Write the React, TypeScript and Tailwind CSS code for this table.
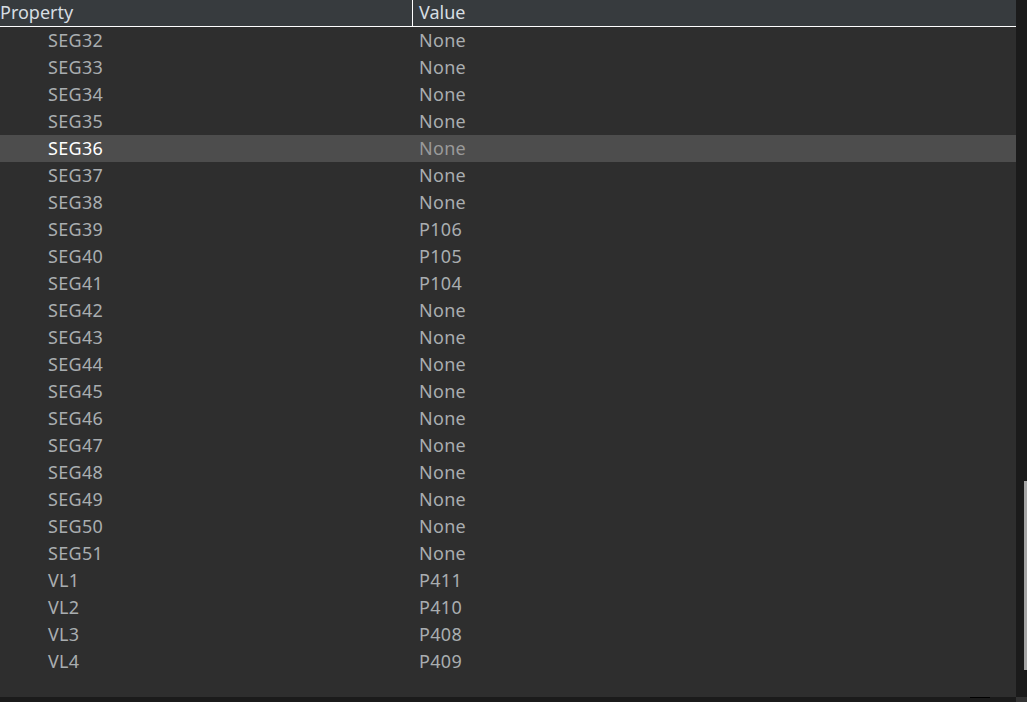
import React from 'react';

const rows: [string, string][] = [
  ['SEG32', 'None'],
  ['SEG33', 'None'],
  ['SEG34', 'None'],
  ['SEG35', 'None'],
  ['SEG36', 'None'],
  ['SEG37', 'None'],
  ['SEG38', 'None'],
  ['SEG39', 'P106'],
  ['SEG40', 'P105'],
  ['SEG41', 'P104'],
  ['SEG42', 'None'],
  ['SEG43', 'None'],
  ['SEG44', 'None'],
  ['SEG45', 'None'],
  ['SEG46', 'None'],
  ['SEG47', 'None'],
  ['SEG48', 'None'],
  ['SEG49', 'None'],
  ['SEG50', 'None'],
  ['SEG51', 'None'],
  ['VL1', 'P411'],
  ['VL2', 'P410'],
  ['VL3', 'P408'],
  ['VL4', 'P409'],
];

export default function App() {
  const selected = 'SEG36';

  return (
    <div
      className="w-[1027px] h-[702px] flex flex-col bg-[#1b1b1b] overflow-hidden text-[18px] leading-none"
      style={{ fontFamily: '"Noto Sans", "Open Sans", sans-serif' }}
    >
      <div className="flex flex-1 min-h-0">
        {/* table */}
        <div className="w-[1016px] flex flex-col bg-[#2e2e2e]">
          <div className="h-[27px] flex bg-[#373b3e] border-b border-white text-[#d6dde2]">
            <div className="w-[413px] flex items-center pb-[2px] border-r border-white">Property</div>
            <div className="flex-1 flex items-center pb-[2px] pl-[6px]">Value</div>
          </div>
          {rows.map(([name, value]) => {
            const isSel = name === selected;
            return (
              <div
                key={name}
                className={`h-[27px] flex items-center pb-[2px] tracking-[0.3px] ${isSel ? 'bg-[#4d4d4d]' : ''}`}
              >
                <div className={`w-[419px] pl-[48px] ${isSel ? 'text-white' : 'text-[#a9adb0]'}`}>{name}</div>
                <div className={isSel ? 'text-[#9a9a9a]' : 'text-[#a9adb0]'}>{value}</div>
              </div>
            );
          })}
        </div>
        {/* scrollbar */}
        <div className="flex-1 flex flex-col pt-[481px] pb-[27px] items-end">
          <div className="w-[3px] flex-1 bg-[#a6a6a6]" />
        </div>
      </div>
      <div className="h-[5px] flex">
        <div className="w-[1016px] flex justify-end pr-[26px]">
          <div className="w-[20px] h-[1px] bg-black" />
        </div>
        <div className="flex-1 bg-[#333333]" />
      </div>
    </div>
  );
}
